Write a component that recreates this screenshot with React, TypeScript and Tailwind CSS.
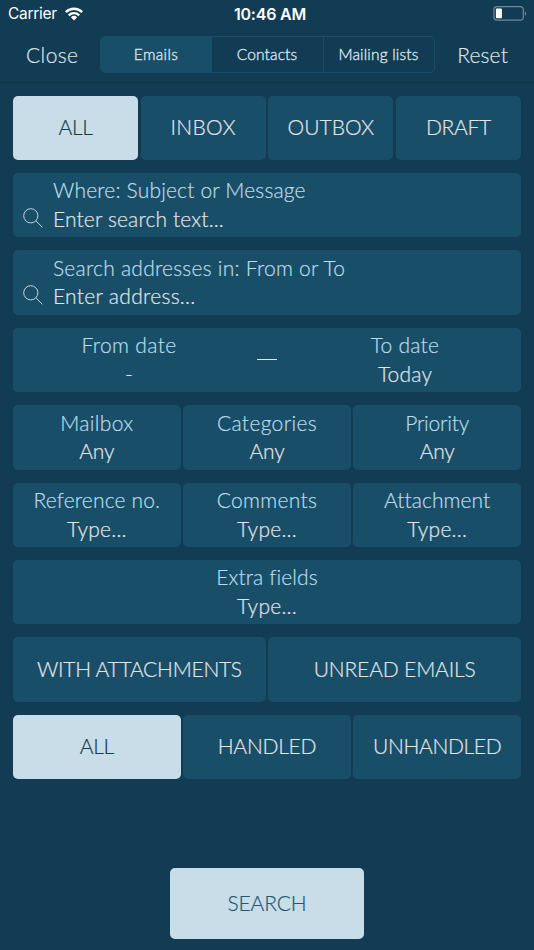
import clsx from "clsx";

type TileProps = {
  label: string;
  spacing?: string;
  active?: boolean;
};

type FieldProps = {
  label: string;
  value: string;
  labelSpacing?: string;
  valueSpacing?: string;
};

const segments = [
  { label: "Emails", spacing: "tracking-[0.35px]" },
  { label: "Contacts", spacing: "tracking-[0.15px]" },
  { label: "Mailing lists", spacing: "tracking-[0.2px]" },
];

const folders: TileProps[] = [
  { label: "ALL", spacing: "tracking-[-0.3px]", active: true },
  { label: "INBOX", spacing: "tracking-[0.3px]" },
  { label: "OUTBOX" },
  { label: "DRAFT", spacing: "tracking-[-0.3px]" },
];

const states: TileProps[] = [
  { label: "ALL", spacing: "tracking-[-0.3px]", active: true },
  { label: "HANDLED", spacing: "tracking-[-0.25px]" },
  { label: "UNHANDLED", spacing: "tracking-[-0.35px]" },
];

const pickers: FieldProps[] = [
  { label: "Mailbox", value: "Any", labelSpacing: "tracking-[0.35px]", valueSpacing: "tracking-[-0.2px]" },
  { label: "Categories", value: "Any", labelSpacing: "tracking-[0.35px]", valueSpacing: "tracking-[-0.2px]" },
  { label: "Priority", value: "Any", labelSpacing: "tracking-[-0.2px]", valueSpacing: "tracking-[-0.2px]" },
];

const inputs: FieldProps[] = [
  { label: "Reference no.", value: "Type...", labelSpacing: "tracking-[0.15px]", valueSpacing: "tracking-[0.25px]" },
  { label: "Comments", value: "Type...", labelSpacing: "tracking-[0.3px]", valueSpacing: "tracking-[0.25px]" },
  { label: "Attachment", value: "Type...", labelSpacing: "tracking-[0.05px]", valueSpacing: "tracking-[0.25px]" },
];

const StatusBar = () => (
  <div className="grid h-7 grid-cols-3 items-center pr-[7px] pl-2 font-['Inter',sans-serif] text-base leading-7 text-white [-webkit-text-stroke:0]">
    <div className="flex items-center gap-2">
      <span className="text-[15.5px] font-normal tracking-[-0.3px]">Carrier</span>
      <svg width="18" height="14" viewBox="0 0 18 14" fill="none" stroke="white" strokeWidth="2.4">
        <path d="M0.9 5.1a11.5 11.5 0 0 1 16.2 0" />
        <path d="M3.8 8.3a7.4 7.4 0 0 1 10.4 0" />
        <path d="M9 13.4 5.9 10.3a4.5 4.5 0 0 1 6.2 0z" fill="white" stroke="none" />
      </svg>
    </div>
    <span className="pl-[5px] text-center font-semibold tracking-[-0.2px] whitespace-nowrap">10:46 AM</span>
    <svg className="-mt-px justify-self-end" width="34" height="15" viewBox="0 0 34 15">
      <rect x="0.9" y="0.7" width="29.4" height="13.4" rx="3.2" fill="none" stroke="#70899a" strokeWidth="1.2" />
      <rect x="2.9" y="2.6" width="6" height="9.6" rx="0.8" fill="white" />
      <path d="M31.9 5.2c1.8 0.8 1.8 3.8 0 4.6z" fill="#70899a" />
    </svg>
  </div>
);

const Header = () => (
  <div className="flex h-[55px] items-center border-b border-[#103449] pr-[26px] pl-[26px] text-[21px] text-[#dfe3e6]">
    <button className="w-[73.5px] text-left tracking-[0.4px]">Close</button>
    <div className="-mt-px grid h-[37px] w-[335px] grid-cols-3 overflow-hidden rounded-[5px] border border-[#194e68] text-[15.5px]">
      {segments.map((item, i) => (
        <button
          key={item.label}
          className={clsx(
            "whitespace-nowrap [-webkit-text-stroke:0.35px]",
            item.spacing,
            i === 0 && "bg-[#194e68]",
            i === 2 && "border-l border-[#194e68]"
          )}
        >
          {item.label}
        </button>
      ))}
    </div>
    <button className="ml-auto tracking-[0.15px]">Reset</button>
  </div>
);

const Tile = ({ label, spacing, active }: TileProps) => (
  <button
    className={clsx(
      "h-full rounded-[5px] pb-0.5 whitespace-nowrap",
      spacing,
      active ? "bg-[#c8dde7] text-[#123c54]" : "bg-[#194e68] text-[#e2e4e6]"
    )}
  >
    {label}
  </button>
);

const Field = ({ label, value, labelSpacing, valueSpacing }: FieldProps) => (
  <div className="flex h-full flex-col items-center rounded-[5px] bg-[#194e68] pt-[3.4px] leading-[28.5px] whitespace-nowrap">
    <span className={clsx("text-[#bcdcea]", labelSpacing)}>{label}</span>
    <span className={clsx("text-[#e2e4e6]", valueSpacing)}>{value}</span>
  </div>
);

const SearchField = ({ label, value, labelSpacing, valueSpacing }: FieldProps) => (
  <div className="flex h-full rounded-[5px] bg-[#194e68] pt-[3.4px] leading-[28.5px]">
    <svg
      className="mt-[31.1px] ml-[10px] shrink-0"
      width="20"
      height="20"
      viewBox="0 0 20 20"
      fill="none"
      stroke="#c4d3db"
      strokeWidth="1"
    >
      <circle cx="7.8" cy="7.8" r="7.1" />
      <path d="M12.9 12.9 19.4 19.3" />
    </svg>
    <div className="ml-[10px] flex flex-col">
      <span className={clsx("text-[#bcdcea]", labelSpacing)}>{label}</span>
      <span className={clsx("text-[#e2e4e6]", valueSpacing)}>{value}</span>
    </div>
  </div>
);

export default function App() {
  return (
    <div className="flex h-[950px] w-[534px] flex-col bg-[#123c54] font-['Lato',sans-serif] text-[21px] font-light [-webkit-text-stroke:0.2px]">
      <StatusBar />
      <Header />

      <div className="grid auto-rows-[64.4px] gap-y-[13px] px-[13px] pt-[12.7px]">
        <div className="grid grid-cols-4 gap-[2.5px]">
          {folders.map((item) => (
            <Tile key={item.label} {...item} />
          ))}
        </div>

        <SearchField
          label="Where: Subject or Message"
          value="Enter search text..."
          labelSpacing="tracking-[0.17px]"
          valueSpacing="tracking-[0.15px]"
        />
        <SearchField
          label="Search addresses in: From or To"
          value="Enter address..."
          labelSpacing="tracking-[0.24px]"
          valueSpacing="tracking-[0.3px]"
        />

        <div className="grid grid-cols-[1fr_44px_1fr] rounded-[5px] bg-[#194e68]">
          <Field label="From date" value="-" labelSpacing="tracking-[0.35px]" />
          <div className="mx-auto mt-[31.3px] h-px w-5 bg-[#e2e4e6]" />
          <Field label="To date" value="Today" labelSpacing="tracking-[0.25px]" valueSpacing="tracking-[0.17px]" />
        </div>

        <div className="grid grid-cols-3 gap-[2.5px]">
          {pickers.map((item) => (
            <Field key={item.label} {...item} />
          ))}
        </div>

        <div className="grid grid-cols-3 gap-[2.5px]">
          {inputs.map((item) => (
            <Field key={item.label} {...item} />
          ))}
        </div>

        <Field label="Extra fields" value="Type..." labelSpacing="tracking-[0.1px]" valueSpacing="tracking-[0.25px]" />

        <div className="grid grid-cols-2 gap-[2.5px]">
          <Tile label="WITH ATTACHMENTS" spacing="tracking-[-0.25px]" />
          <Tile label="UNREAD EMAILS" spacing="tracking-[-0.15px]" />
        </div>

        <div className="grid grid-cols-3 gap-[2.5px]">
          {states.map((item) => (
            <Tile key={item.label} {...item} />
          ))}
        </div>
      </div>

      <button className="mx-auto mt-auto mb-[10.7px] h-[71px] w-[193.5px] rounded-[5px] bg-[#c8dde7] pb-0.5 tracking-[-0.15px] text-[#1d5874]">
        SEARCH
      </button>
    </div>
  );
}
